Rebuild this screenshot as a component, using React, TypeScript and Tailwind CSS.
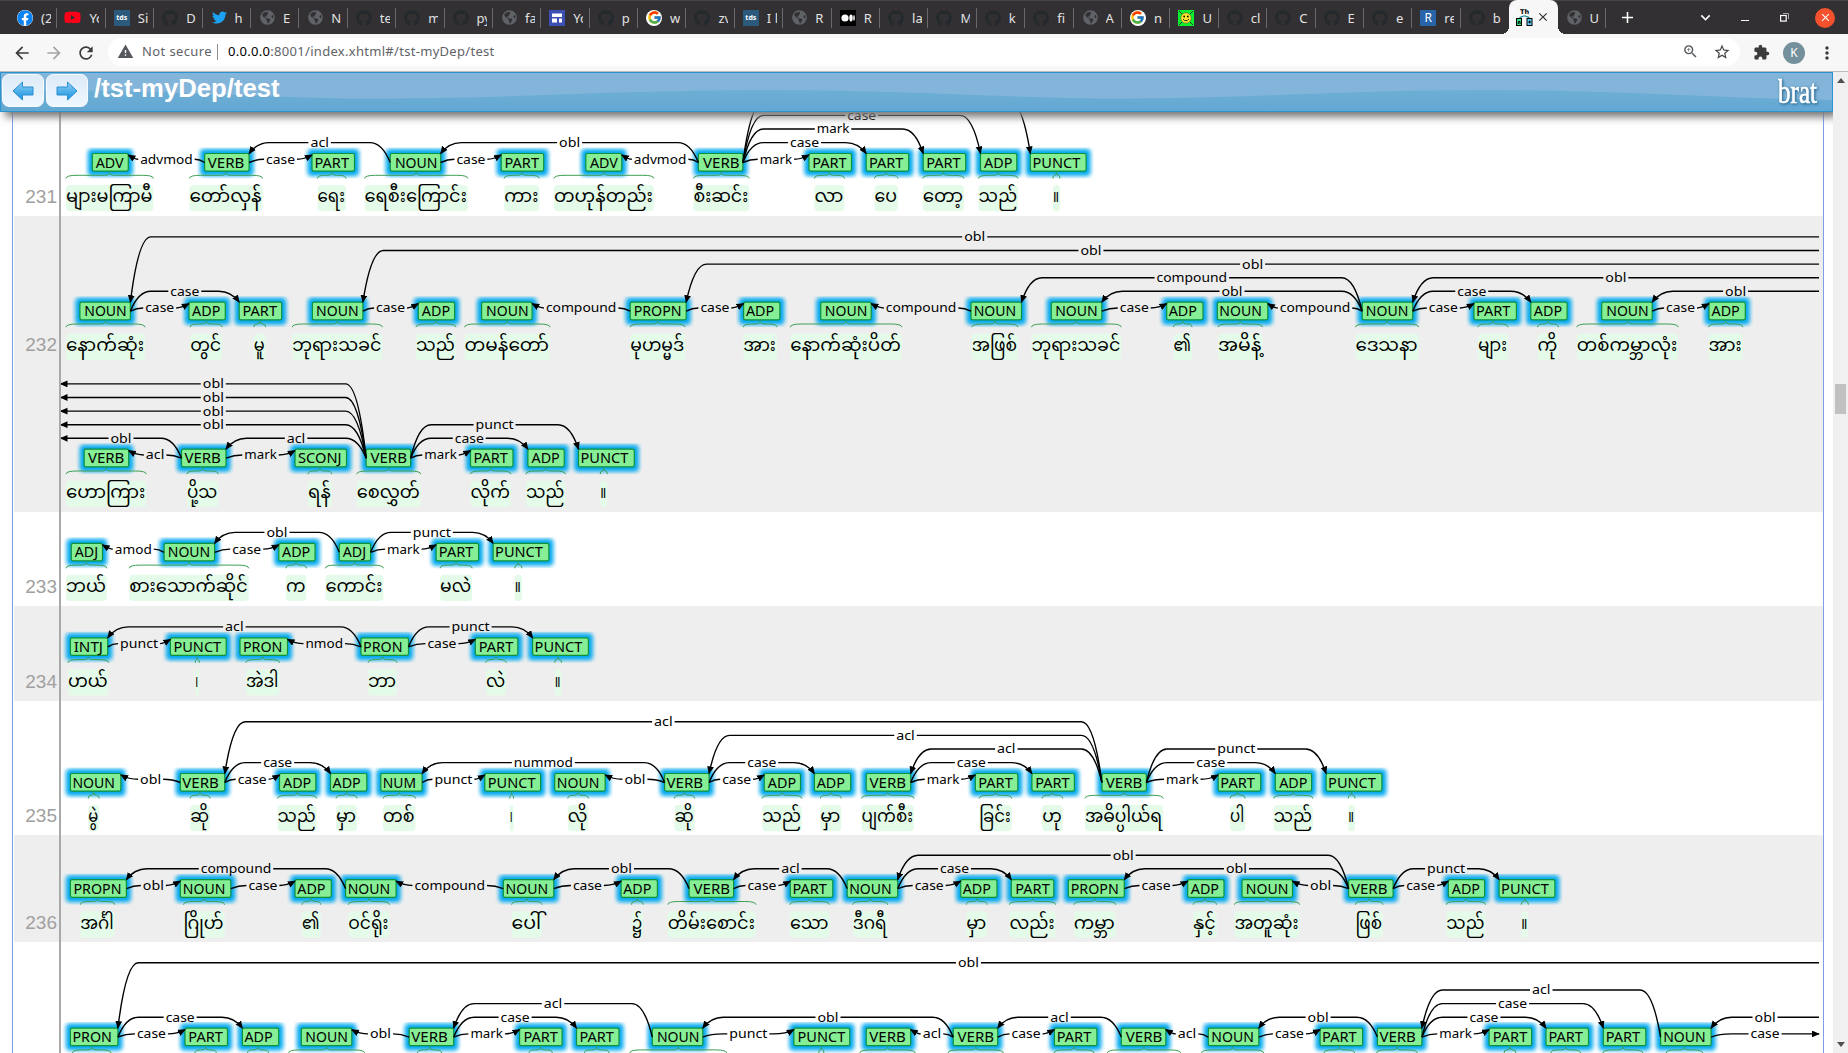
import React from "react";
import { FaFacebook, FaYoutube, FaGithub, FaTwitter, FaGlobeAmericas } from "react-icons/fa";
import { FcGoogle } from "react-icons/fc";
import {
  MdArrowBack, MdArrowForward, MdRefresh, MdWarning, MdZoomIn, MdStarBorder,
  MdExtension, MdMoreVert, MdExpandMore, MdAdd, MdClose,
} from "react-icons/md";

/* [tag, box left, word, word left, word right] */
type Token = [string, number, string, number, number];
type End = number | "L" | "R";
/* [head, dependent, label, level] */
type Arc = [End, End, string, number];
interface Row {
  id?: string;
  top: number;
  height: number;
  tagTop: number;
  shaded?: boolean;
  tokens: Token[];
  arcs: Arc[];
}

const TAG_W: Record<string, number> = {
  ADV: 36, VERB: 44.5, PART: 42.5, NOUN: 50.5, ADP: 36.3, PUNCT: 55.8, PROPN: 56,
  ADJ: 31.3, INTJ: 37.3, PRON: 47.5, NUM: 41.3, SCONJ: 51.5,
};
const LABEL_W: Record<string, number> = {
  case: 29, advmod: 52.5, mark: 32.5, acl: 18.5, obl: 21, compound: 70.5, punct: 38,
  amod: 37, nmod: 37.5, nummod: 59,
};

const ROWS: Row[] = [
  {
    id: "231", top: 112, height: 104, tagTop: 153.5,
    tokens: [
      ["ADV", 92.3, "များမကြာမီ", 66, 153.4],
      ["VERB", 204.6, "တော်လှန်", 189.4, 262.6],
      ["PART", 312, "ရေး", 317.5, 346],
      ["NOUN", 390.2, "ရေစီးကြောင်း", 364.6, 467.8],
      ["PART", 501.2, "ကား", 504.2, 539.3],
      ["ADV", 585.8, "တဟုန်တည်း", 554, 653.9],
      ["VERB", 698.4, "စီးဆင်း", 693.4, 749.2],
      ["PART", 809, "လာ", 814.4, 844.5],
      ["PART", 866.2, "ပေ", 874.5, 897.9],
      ["PART", 923.2, "တော့", 922.8, 964],
      ["ADP", 980.5, "သည်", 978.5, 1018],
      ["PUNCT", 1030.3, "။", 1052.9, 1060],
    ],
    arcs: [
      [1, 0, "advmod", 0], [1, 2, "case", 0], [3, 1, "acl", 1], [3, 4, "case", 0],
      [6, 3, "obl", 1], [6, 5, "advmod", 0], [6, 7, "mark", 0], [6, 8, "case", 1],
      [6, 9, "mark", 2], [6, 10, "case", 3], [6, 11, "punct", 4],
    ],
  },
  {
    id: "232", top: 216, height: 148, tagTop: 302.2, shaded: true,
    tokens: [
      ["NOUN", 79.9, "နောက်ဆုံး", 66, 145],
      ["ADP", 189, "တွင်", 190.2, 222.2],
      ["PART", 239.2, "မူ", 253.8, 265.7],
      ["NOUN", 312.4, "ဘုရားသခင်", 292.2, 382.4],
      ["ADP", 418.3, "သည်", 416, 455.9],
      ["NOUN", 481.6, "တမန်တော်", 464.6, 550],
      ["PROPN", 630.2, "မုဟမ္မဒ်", 630.2, 685.1],
      ["ADP", 743.6, "အား", 743.3, 776.9],
      ["NOUN", 820.7, "နောက်ဆုံးပိတ်", 790.3, 901.8],
      ["NOUN", 971, "အဖြစ်", 971.8, 1018],
      ["NOUN", 1051.3, "ဘုရားသခင်", 1031.5, 1121.3],
      ["ADP", 1166.7, "၏", 1173.5, 1192],
      ["NOUN", 1217.3, "အမိန့်", 1218.1, 1262.5],
      ["NOUN", 1362.2, "ဒေသနာ", 1355.4, 1418.7],
      ["PART", 1473.9, "များ", 1477.9, 1508],
      ["ADP", 1530.8, "ကို", 1537.6, 1558.4],
      ["NOUN", 1601.7, "တစ်ကမ္ဘာလုံး", 1576.8, 1678.2],
      ["ADP", 1709, "အား", 1708.6, 1742.7],
    ],
    arcs: [
      ["R", 0, "obl", 5], ["R", 3, "obl", 4], ["R", 6, "obl", 3], [13, 9, "compound", 2],
      ["R", 13, "obl", 2], [13, 10, "obl", 1], [13, 12, "compound", 0], [13, 14, "case", 0],
      [13, 15, "case", 1], ["R", 16, "obl", 1], [16, 17, "case", 0], [0, 1, "case", 0],
      [0, 2, "case", 1], [3, 4, "case", 0], [6, 5, "compound", 0], [6, 7, "case", 0],
      [9, 8, "compound", 0], [10, 11, "case", 0],
    ],
  },
  {
    top: 364, height: 148, tagTop: 449.2, shaded: true,
    tokens: [
      ["VERB", 84.2, "ဟောကြား", 66, 146.3],
      ["VERB", 181.5, "ပို့သ", 187, 218.3],
      ["SCONJ", 295, "ရန်", 308, 331.7],
      ["VERB", 366.1, "စေလွှတ်", 356.7, 420.7],
      ["PART", 470.5, "လိုက်", 470.5, 510.9],
      ["ADP", 527.9, "သည်", 525.9, 565.4],
      ["PUNCT", 578.5, "။", 600.2, 607.3],
    ],
    arcs: [
      [3, "L", "obl", 5], [3, "L", "obl", 4], [3, "L", "obl", 3], [3, "L", "obl", 2],
      [1, "L", "obl", 1], [1, 0, "acl", 0], [3, 1, "acl", 1], [1, 2, "mark", 0],
      [3, 4, "mark", 0], [3, 5, "case", 1], [3, 6, "punct", 2],
    ],
  },
  {
    id: "233", top: 512, height: 94, tagTop: 543.3,
    tokens: [
      ["ADJ", 71.2, "ဘယ်", 66, 106.8],
      ["NOUN", 164.1, "စားသောက်ဆိုင်", 129.3, 248.7],
      ["ADP", 278.8, "က", 285.9, 306.4],
      ["ADJ", 339.3, "ကောင်း", 325.4, 383.5],
      ["PART", 436.1, "မလဲ", 440.1, 472.1],
      ["PUNCT", 493.1, "။", 514.8, 521.9],
    ],
    arcs: [[1, 0, "amod", 0], [3, 1, "obl", 1], [1, 2, "case", 0], [3, 4, "mark", 0], [3, 5, "punct", 1]],
  },
  {
    id: "234", top: 606, height: 94.5, tagTop: 637.8, shaded: true,
    tokens: [
      ["INTJ", 70.4, "ဟယ်", 68, 108.7],
      ["PUNCT", 170.4, "၊", 195.3, 199.3],
      ["PRON", 240, "အဲဒါ", 245.9, 279.5],
      ["PRON", 361, "ဘာ", 368.1, 397],
      ["PART", 475.3, "လဲ", 485.9, 506.1],
      ["PUNCT", 532.6, "။", 554.7, 561.5],
    ],
    arcs: [[3, 0, "acl", 1], [0, 1, "punct", 0], [3, 2, "nmod", 0], [3, 4, "case", 0], [3, 5, "punct", 1]],
  },
  {
    id: "235", top: 700.5, height: 134, tagTop: 773,
    tokens: [
      ["NOUN", 70.4, "မွဲ", 88.2, 99.2],
      ["VERB", 180.3, "ဆို", 190.2, 210],
      ["ADP", 279.5, "သည်", 277.6, 316.7],
      ["ADP", 330.5, "မှာ", 336.1, 357],
      ["NUM", 380.8, "တစ်", 383.1, 415.6],
      ["PUNCT", 484.8, "၊", 509.7, 513.6],
      ["NOUN", 554.7, "လို", 567.8, 588.4],
      ["VERB", 664.6, "ဆို", 674.4, 694.6],
      ["ADP", 764.2, "သည်", 762.2, 801.8],
      ["ADP", 814.4, "မှာ", 820.3, 841.3],
      ["VERB", 866.2, "ပျက်စီး", 861.5, 914],
      ["PART", 975.3, "ခြင်း", 979.3, 1011.7],
      ["PART", 1031.9, "ဟု", 1042.2, 1062.7],
      ["VERB", 1101.9, "အဓိပ္ပါယ်ရ", 1084.9, 1163.2],
      ["PART", 1218.2, "ပါ", 1230, 1245.2],
      ["ADP", 1275.3, "သည်", 1273.7, 1312.9],
      ["PUNCT", 1326.1, "။", 1348.2, 1355],
    ],
    arcs: [
      [1, 0, "obl", 0], [1, 2, "case", 0], [1, 3, "case", 1], [13, 1, "acl", 4],
      [7, 4, "nummod", 1], [4, 5, "punct", 0], [7, 6, "obl", 0], [7, 8, "case", 0],
      [7, 9, "case", 1], [13, 7, "acl", 3], [13, 10, "acl", 2], [10, 11, "mark", 0],
      [10, 12, "case", 1], [13, 14, "mark", 0], [13, 15, "case", 1], [13, 16, "punct", 2],
    ],
  },
  {
    id: "236", top: 834.5, height: 107.5, tagTop: 879.2, shaded: true,
    tokens: [
      ["PROPN", 70.4, "အင်္ဂါ", 80.3, 114.7],
      ["NOUN", 180.3, "ဂြိုဟ်", 183.5, 224.6],
      ["ADP", 295, "၏", 302.1, 320.7],
      ["NOUN", 345.6, "ဝင်ရိုး", 348.3, 389.5],
      ["NOUN", 503.3, "ပေါ်", 511.6, 542.1],
      ["ADP", 621.1, "၌", 631.4, 643.2],
      ["VERB", 689.1, "တိမ်းစောင်း", 667.7, 755.9],
      ["PART", 790.3, "သော", 789.9, 829.4],
      ["NOUN", 847.2, "ဒီဂရီ", 852.8, 887.6],
      ["ADP", 960.7, "မှာ", 966.3, 987.2],
      ["PART", 1011.3, "လည်း", 1009.4, 1055.6],
      ["PROPN", 1068.3, "ကမ္ဘာ", 1073.8, 1115.7],
      ["ADP", 1187.7, "နှင့်", 1193.2, 1216.6],
      ["NOUN", 1242, "အတူဆုံး", 1234.4, 1299.7],
      ["VERB", 1348.6, "ဖြစ်", 1355.4, 1383],
      ["ADP", 1448.3, "သည်", 1446.3, 1485.5],
      ["PUNCT", 1499.1, "။", 1521.2, 1528.4],
    ],
    arcs: [
      [3, 0, "compound", 1], [0, 1, "obl", 0], [1, 2, "case", 0], [4, 3, "compound", 0],
      [6, 4, "obl", 1], [4, 5, "case", 0], [8, 6, "acl", 1], [6, 7, "case", 0],
      [14, 8, "obl", 2], [8, 9, "case", 0], [8, 10, "case", 1], [14, 11, "obl", 1],
      [11, 12, "case", 0], [14, 13, "obl", 0], [14, 15, "case", 0], [14, 16, "punct", 1],
    ],
  },
  {
    top: 942, height: 111, tagTop: 1028.1,
    tokens: [
      ["PRON", 70.4, "", 72.4, 111.1],
      ["PART", 185, "", 194.9, 216.3],
      ["ADP", 242.4, "", 247.5, 268.5],
      ["NOUN", 301.3, "", 288.6, 364.6],
      ["VERB", 409.2, "", 417.5, 441.7],
      ["PART", 519.6, "", 529, 552.4],
      ["PART", 576.5, "", 584.4, 609],
      ["NOUN", 652.3, "", 629.8, 726.6],
      ["PUNCT", 793.9, "", 818.8, 823.9],
      ["VERB", 866.2, "", 859.9, 915.2],
      ["VERB", 953.2, "", 948.1, 1003.4],
      ["PART", 1054.4, "", 1054, 1094],
      ["VERB", 1121.3, "", 1107.4, 1180.6],
      ["NOUN", 1208.3, "", 1201.5, 1263.7],
      ["PART", 1320.1, "", 1324.1, 1354.6],
      ["VERB", 1377.4, "", 1376.6, 1417.4],
      ["PART", 1489.1, "", 1504, 1516],
      ["PART", 1546, "", 1550.8, 1580.5],
      ["PART", 1603.3, "", 1602.9, 1642.9],
      ["NOUN", 1660.6, "", 1666.2, 1702.6],
    ],
    arcs: [
      ["R", 0, "obl", 5], [0, 1, "case", 0], [0, 2, "case", 1], [4, 3, "obl", 0],
      [7, 4, "acl", 2], [4, 5, "mark", 0], [4, 6, "case", 1], [10, 7, "obl", 1],
      [7, 8, "punct", 0], [10, 9, "acl", 0], [12, 10, "acl", 1], [10, 11, "case", 0],
      [13, 12, "acl", 0], [15, 13, "obl", 1], [13, 14, "case", 0], [19, 15, "acl", 3],
      [15, 16, "mark", 0], [15, 17, "case", 1], [15, 18, "case", 2], ["R", 19, "obl", 1],
      [19, "R", "case", 0],
    ],
  },
];

const LEFT = 60.5;
const RIGHT = 1819;

function ArcLine({ arc, tokens, t }: { arc: Arc; tokens: Token[]; t: number }) {
  const [head, dep, label, level] = arc;
  const num = (e: End) => (e === "L" ? -1 : e === "R" ? 999 : e);
  const dir = num(dep) > num(head) ? 1 : -1;
  const edge = (e: End, side: number) => {
    if (e === "L") return LEFT;
    if (e === "R") return RIGHT;
    const tok = tokens[e];
    return side > 0 ? tok[1] + TAG_W[tok[0]] : tok[1];
  };
  const x0 = edge(head, dir);
  const x1 = edge(dep, -dir);
  const y = level === 0 ? t + 5.8 : t - 10.9 - 13.6 * (level - 1);
  const mid = (x0 + x1) / 2;
  const half = LABEL_W[label] / 2 + 2;
  const reach = Math.min(20.5, Math.abs(x1 - x0) / 2 - half);
  const startLine = typeof head === "number"
    ? `M${x0},${t + 9} Q${x0 + dir * Math.min(8, reach / 2)},${y} ${x0 + dir * reach},${y} L${mid - dir * half},${y}`
    : `M${x0},${y} L${mid - dir * half},${y}`;
  const tipY = level === 0 ? t + 1.5 : t;
  const endLine = typeof dep === "number"
    ? `M${mid + dir * half},${y} L${x1 - dir * reach},${y} Q${x1 - dir * Math.min(8, reach / 2 + 2)},${y} ${x1},${tipY}`
    : `M${mid + dir * half},${y} L${x1},${y}`;
  return (
    <g>
      <path d={startLine} fill="none" stroke="#000" strokeWidth="1.4" />
      <path d={endLine} fill="none" stroke="#000" strokeWidth="1.4" markerEnd="url(#tip)" />
      <text
        x={mid} y={y + 4.4} textAnchor="middle" fontSize="13" textLength={LABEL_W[label]}
        lengthAdjust="spacingAndGlyphs" className="font-['Noto_Sans',sans-serif]" fill="#000"
      >
        {label}
      </text>
    </g>
  );
}

function TokenMark({ token, t }: { token: Token; t: number }) {
  const [tag, x, word, l, r] = token;
  const w = TAG_W[tag];
  const c = (l + r) / 2;
  const q = Math.min(11, (r - l) / 4);
  const p = Math.min(5, (r - l) / 4);
  const tc = Math.max(x + w / 2 - 2, Math.min(x + w / 2 + 2, c));
  const brace =
    `M${l},${t + 25} Q${l},${t + 21.8} ${l + q},${t + 21.8} L${c - p},${t + 21.8} Q${c},${t + 21.8} ${c},${t + 19}` +
    ` Q${c},${t + 21.8} ${c + p},${t + 21.8} L${r - q},${t + 21.8} Q${r},${t + 21.8} ${r},${t + 25}`;
  return (
    <g>
      <svg x={x - 8} y={t - 6} width={w + 16} height={31} overflow="hidden">
        <rect x={3.5} y={1.5} width={w + 9} height={27} rx={4} fill="#00a8ee" filter="url(#glow)" />
      </svg>
      <rect x={x} y={t} width={w} height={17.6} rx={1.8} fill="#86ee94" stroke="#0f9138" strokeWidth="1.2" />
      <text
        x={tc} y={t + 14} textAnchor="middle" fontSize="13.8" textLength={w - 8} lengthAdjust="spacingAndGlyphs"
        className="font-['Noto_Sans',sans-serif]" fill="#000"
      >
        {tag}
      </text>
      <path d={brace} fill="none" stroke="#3c9f55" strokeWidth="1" />
      <rect x={l} y={t + 31.5} width={r - l} height={26.3} rx={Math.min(4, (r - l) / 2)} fill="#e5fbe9" />
      {word && (
        <text
          x={l} y={t + 48.8} fontSize="18" textLength={r - l - 1} lengthAdjust="spacingAndGlyphs"
          className="font-['Noto_Sans_Myanmar','Padauk','Noto_Sans',sans-serif]" fill="#000"
        >
          {word}
        </text>
      )}
    </g>
  );
}

function SentenceRow({ row }: { row: Row }) {
  const t = row.tagTop - row.top;
  return (
    <div className={`flex shrink-0 ${row.shaded ? "bg-[#eeeeee]" : "bg-white"}`} style={{ height: row.height }}>
      <div className="flex w-[45px] shrink-0 items-end justify-end pb-[10px] pr-[2px] font-['Liberation_Sans',sans-serif] text-[19px] leading-none text-[#a0a0a0]">
        {row.id}
      </div>
      <div className="w-[2px] shrink-0 bg-[#a9a9a9]" />
      <svg width={1761} height={row.height} viewBox={`61 0 1761 ${row.height}`} className="block shrink-0">
        {row.tokens.map((tok, i) => <TokenMark key={i} token={tok} t={t} />)}
        {row.arcs.map((arc, i) => <ArcLine key={i} arc={arc} tokens={row.tokens} t={t} />)}
      </svg>
    </div>
  );
}

function SvgDefs() {
  return (
    <svg width="0" height="0" className="absolute" aria-hidden="true">
      <defs>
        <marker id="tip" markerUnits="userSpaceOnUse" markerWidth="9" markerHeight="8" refX="7" refY="3.4" orient="auto">
          <path d="M0,0 L7.8,3.4 L0,6.8 z" fill="#000" />
        </marker>
        <filter id="glow" x="-30%" y="-50%" width="160%" height="200%">
          <feGaussianBlur stdDeviation="2.2" />
        </filter>
      </defs>
    </svg>
  );
}

type Kind = "fb" | "yt" | "tds" | "gh" | "tw" | "globe" | "sites" | "google" | "medium" | "smile" | "r" | "brat";
const TABS: [Kind, string][] = [
  ["fb", "(2"], ["yt", "Yo"], ["tds", "Si"], ["gh", "D"], ["tw", "h"], ["globe", "E"], ["globe", "N"],
  ["gh", "te"], ["gh", "m"], ["gh", "py"], ["globe", "fa"], ["sites", "Yo"], ["gh", "p"], ["google", "w"],
  ["gh", "zv"], ["tds", "I l"], ["globe", "R"], ["medium", "R"], ["gh", "la"], ["gh", "M"], ["gh", "k"],
  ["gh", "fi"], ["globe", "A"], ["google", "n"], ["smile", "U"], ["gh", "cl"], ["gh", "C"], ["gh", "E"],
  ["gh", "e"], ["r", "re"], ["gh", "b"], ["brat", ""], ["globe", "U"],
];

function Favicon({ kind }: { kind: Kind }) {
  switch (kind) {
    case "fb": return <FaFacebook size={16} className="rounded-full bg-white text-[#0a84f5]" />;
    case "yt": return <FaYoutube size={17} className="text-[#ff0018]" />;
    case "tds": return <span className="flex size-4 items-center justify-center bg-[#2c5a7c] text-[7px] font-bold leading-none text-white">tds</span>;
    case "gh": return <FaGithub size={16} className="text-[#24292e]" />;
    case "tw": return <FaTwitter size={15} className="text-[#1da1f2]" />;
    case "globe": return <FaGlobeAmericas size={15} className="text-[#5f6368]" />;
    case "google": return <span className="flex size-4 items-center justify-center rounded-full bg-white"><FcGoogle size={15} /></span>;
    case "medium": return (
      <svg width="16" height="16" viewBox="0 0 16 16">
        <rect width="16" height="16" fill="#000" />
        <circle cx="5" cy="8" r="3.6" fill="#fff" />
        <ellipse cx="11" cy="8" rx="1.7" ry="3.4" fill="#fff" />
        <ellipse cx="14" cy="8" rx=".8" ry="3" fill="#fff" />
      </svg>
    );
    case "sites": return (
      <svg width="16" height="16" viewBox="0 0 16 16">
        <rect width="16" height="16" fill="#3c50b4" />
        <rect x="3" y="3.500" width="10" height="3.500" fill="#fff" />
        <rect x="3" y="8.500" width="5" height="4" fill="#fff" />
        <rect x="10" y="8.500" width="3" height="4" fill="#fff" />
      </svg>
    );
    case "smile": return (
      <svg width="16" height="16" viewBox="0 0 16 16">
        <rect width="16" height="16" fill="#0bf02c" />
        <path d="M1 1l4 4M15 1l-4 4M1 15l4-4M15 15l-4-4" stroke="#333" />
        <circle cx="8" cy="8" r="5.2" fill="#ffe92e" stroke="#554" strokeWidth=".6" />
        <circle cx="6.2" cy="6.5" r=".9" /><circle cx="9.8" cy="6.5" r=".9" />
        <path d="M5 9.2Q8 12.4 11 9.2" stroke="#222" fill="none" />
      </svg>
    );
    case "r": return <span className="flex size-4 items-center justify-center rounded-[1px] bg-[#2764a8] text-[12px] leading-none text-white">R</span>;
    default: return (
      <svg width="17" height="17" viewBox="0 0 17 17">
        <text x="8.5" y="5.2" fontSize="6.5" fontWeight="bold" textAnchor="middle" className="font-['DejaVu_Sans',sans-serif]">Th</text>
        <path d="M4 9V8.500L7 7.200M13 9V8.500L10 7.200M7 7h3" stroke="#0b7f93" fill="none" strokeWidth="1.2" />
        <rect x=".5" y="9.500" width="5" height="7" fill="#3fe08a" stroke="#000" />
        <rect x="11" y="9.500" width="5" height="7" fill="#5fc8f5" stroke="#000" />
        <path d="M2.300 15v-2.500h1.700v2.500M12.300 13h2.600M13.600 11.700v2.600" stroke="#000" fill="none" />
      </svg>
    );
  }
}

function TabStrip() {
  return (
    <div className="flex h-[34px] items-stretch border-t border-[#464446] bg-[#323032] font-['Noto_Sans',sans-serif]">
      <div className="flex w-[1606px] shrink-0 pl-[9px]">
        {TABS.map(([kind, label], i) =>
          kind === "brat" ? (
            <div key={i} className="relative -mt-px flex min-w-0 flex-1 basis-0 items-center rounded-t-[8px] bg-[#f7f7f7]">
              <span className="ml-[7px] shrink-0"><Favicon kind={kind} /></span>
              <MdClose size={14} className="ml-[3px] shrink-0 text-[#333]" />
              <span className="absolute -left-2 bottom-0 size-2 bg-[radial-gradient(circle_at_0_0,transparent_8px,#f7f7f7_8px)]" />
              <span className="absolute -right-2 bottom-0 size-2 bg-[radial-gradient(circle_at_100%_0,transparent_8px,#f7f7f7_8px)]" />
            </div>
          ) : (
            <div key={i} className="flex min-w-0 flex-1 basis-0 items-center">
              <span className="flex w-[24px] shrink-0 items-center justify-end"><Favicon kind={kind} /></span>
              <span className="ml-[8px] w-[10px] shrink-0 overflow-hidden whitespace-nowrap text-[13px] leading-5 text-[#e2e2e2]">{label}</span>
              <span className={`ml-auto h-5 w-px ${i === 30 ? "bg-transparent" : "bg-[#6b696b]"}`} />
            </div>
          )
        )}
      </div>
      <div className="flex flex-1 items-center text-white">
        <MdAdd size={19} className="ml-[12px]" />
        <MdExpandMore size={19} className="ml-[59px]" />
        <span className="ml-[26px] mt-[6px] h-px w-2 bg-white" />
        <svg width="9" height="9" viewBox="0 0 9 9" className="ml-[31px]">
          <rect x=".6" y="2.500" width="5.600" height="5.600" fill="none" stroke="#fff" strokeWidth="1.200" />
          <path d="M3 .5h5.500v5.500" fill="none" stroke="#aaa" />
        </svg>
        <span className="ml-[26px] flex size-5 items-center justify-center rounded-full bg-[#f4512c]"><MdClose size={13} /></span>
      </div>
    </div>
  );
}

function Toolbar() {
  return (
    <div className="flex h-[38px] shrink-0 items-center border-b border-[#bdbdbd] bg-[#f7f7f7] font-['Noto_Sans',sans-serif] text-[13px] text-[#3b3b3b]">
      <MdArrowBack size={20} className="ml-[12px]" />
      <MdArrowForward size={20} className="ml-[12px] text-[#a5a5a5]" />
      <MdRefresh size={20} className="ml-[12px]" />
      <div className="ml-[12px] mb-[2px] flex h-7 w-[1632px] shrink-0 items-center rounded-full bg-white pl-[9px] pr-[9px]">
        <MdWarning size={17} className="text-[#55585c]" />
        <span className="ml-[8px] w-[68px] whitespace-nowrap tracking-[0.03em] text-[#5f6368]">Not secure</span>
        <span className="ml-[7px] h-4 w-px bg-[#8a8d91]" />
        <span className="ml-[10px] whitespace-nowrap text-[#5f6368] tracking-[0.023em]"><span className="text-black">0.0.0.0</span>:8001/index.xhtml#/tst-myDep/test</span>
        <span className="flex-1" />
        <MdZoomIn size={17} className="text-[#55585c]" />
        <MdStarBorder size={18} className="ml-[14px] text-[#444]" />
      </div>
      <MdExtension size={17} className="ml-[13px]" />
      <span className="ml-[13px] flex size-[22px] items-center justify-center rounded-full bg-[#74909c] text-[12px] leading-none text-white">K</span>
      <MdMoreVert size={20} className="ml-[12px]" />
    </div>
  );
}

function NavButton({ flip }: { flip?: boolean }) {
  return (
    <span className="flex h-[33px] w-[42px] items-center justify-center rounded-[7px] border border-[#f5fbff] bg-linear-to-b from-[#ddebf8] to-[#eef7ff]">
      <svg width="22" height="20" viewBox="0 0 22 20" className={flip ? "-scale-x-100" : ""}>
        <defs>
          <linearGradient id="arrowFill" x1="0" y1="0" x2="0" y2="1">
            <stop offset="0" stopColor="#8ed0f3" /><stop offset="1" stopColor="#1590e0" />
          </linearGradient>
        </defs>
        <path d="M1 10L10.500 1V6H21V14H10.500V19Z" fill="url(#arrowFill)" stroke="#2b8fd2" strokeLinejoin="round" />
      </svg>
    </span>
  );
}

function BratHeader() {
  return (
    <header className="relative z-10 flex h-10 w-[1833px] shrink-0 items-start border border-[#2b93d0] bg-[#82b5d9] shadow-[5px_5px_8px_#777]">
      <svg className="absolute inset-0" width="1831" height="38" viewBox="0 0 1831 38">
        <defs>
          <linearGradient id="waveFill" x1="0" y1="0" x2="0" y2="1">
            <stop offset="0" stopColor="#6eaed5" /><stop offset="1" stopColor="#62a8d2" />
          </linearGradient>
        </defs>
        <path d="M0 20C40 17 60 17 90 17.500C200 19 280 25.500 375 25.500C520 25.500 610 17 780 17C900 17 1010 25.500 1124 25.500C1240 25.500 1350 17 1480 17C1620 17 1720 25.500 1831 27V38H0Z" fill="url(#waveFill)" />
      </svg>
      <div className="relative flex w-full items-start pt-px">
        <div className="flex gap-[2px] pl-px"><NavButton /><NavButton flip /></div>
        <span className="ml-[6px] mt-[2px] whitespace-nowrap font-['Liberation_Sans',sans-serif] text-[25.700px] font-bold leading-none text-white">/tst-myDep/test</span>
        <svg width="44" height="34" viewBox="0 0 44 34" className="ml-auto mr-[10px] mt-px [filter:drop-shadow(1px_1px_1.500px_#1d5c86)]">
          <text x="0" y="28" fontSize="34" fill="#fff" stroke="#fff" strokeWidth=".7" textLength="39" lengthAdjust="spacingAndGlyphs" className="font-['Liberation_Serif',serif]">brat</text>
        </svg>
      </div>
    </header>
  );
}

export default function App() {
  return (
    <div className="flex h-[1053px] w-[1848px] flex-col overflow-hidden bg-white">
      <SvgDefs />
      <TabStrip />
      <Toolbar />
      <div className="flex min-h-0 flex-1">
        <div className="flex w-[1833px] shrink-0 flex-col overflow-hidden">
          <BratHeader />
          <main className="ml-[12px] flex min-h-0 w-[1812px] flex-1 flex-col overflow-hidden border-x border-[#7b9fe8] pl-px">
            {ROWS.map((row) => <SentenceRow key={row.top} row={row} />)}
          </main>
        </div>
        <div className="flex w-[15px] shrink-0 flex-col items-center bg-[#f0f0f0]">
          <span className="mt-[6px] border-x-[4px] border-b-[5px] border-x-transparent border-b-[#505050]" />
          <span className="mt-[301px] h-[30px] w-[11px] bg-[#c1c1c1]" />
          <span className="mb-[6px] mt-auto border-x-[4px] border-t-[5px] border-x-transparent border-t-[#505050]" />
        </div>
      </div>
    </div>
  );
}
